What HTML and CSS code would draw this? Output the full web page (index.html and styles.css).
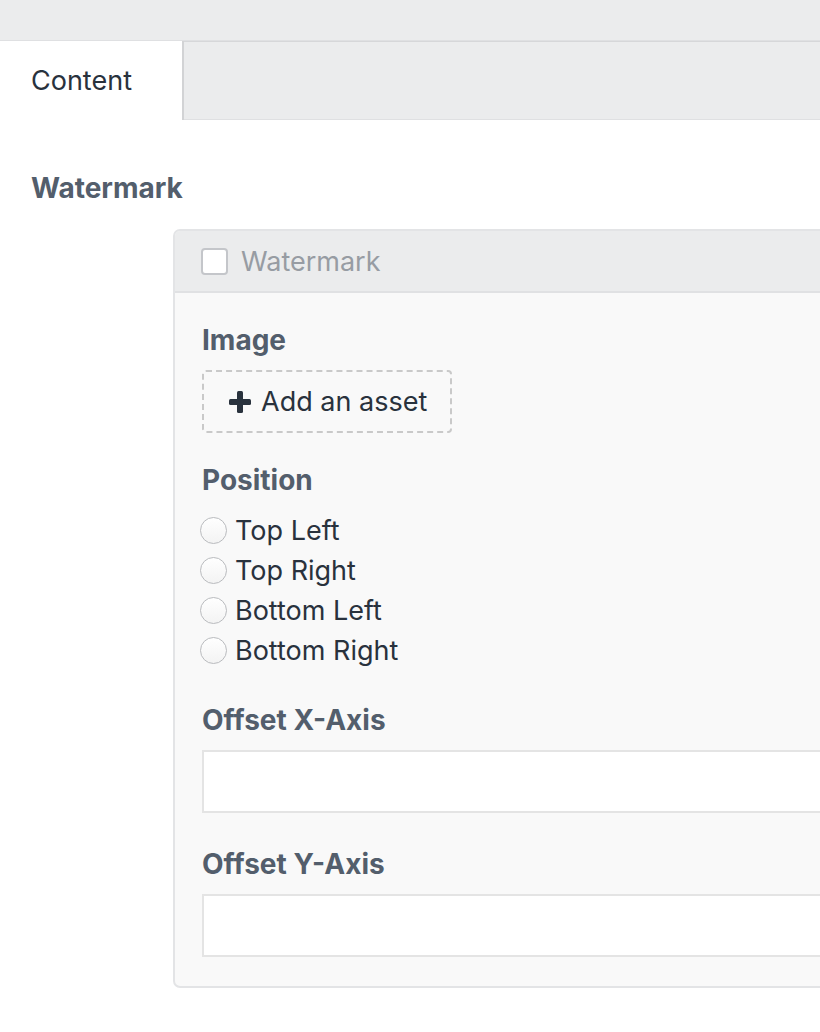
FILE: index.html
```html
<!DOCTYPE html>
<html lang="en">
<head>
<meta charset="utf-8">
<title>Watermark</title>
<link rel="stylesheet" href="styles.css">
</head>
<body>
<div class="topbar"></div>
<div class="tabs">
  <div class="tab active">Content</div>
  <div class="tab-fill"></div>
</div>
<main class="content">
  <h2 class="section-title">Watermark</h2>
  <div class="panel">
    <div class="panel-head">
      <span class="checkbox"></span>
      <span class="panel-title">Watermark</span>
    </div>
    <div class="panel-body">
      <div class="field field-image">
        <div class="label">Image</div>
        <div class="asset-btn">
          <svg class="plus" viewBox="0 0 22 22" width="22" height="22"><rect x="8" y="0" width="6" height="22" rx="1.5" fill="#29323d"/><rect x="0" y="8" width="22" height="6" rx="1.5" fill="#29323d"/></svg>
          <span>Add an asset</span>
        </div>
      </div>
      <div class="field field-position">
        <div class="label">Position</div>
        <div class="radios">
          <div class="radio-row"><span class="radio"></span><span>Top Left</span></div>
          <div class="radio-row"><span class="radio"></span><span>Top Right</span></div>
          <div class="radio-row"><span class="radio"></span><span>Bottom Left</span></div>
          <div class="radio-row"><span class="radio"></span><span>Bottom Right</span></div>
        </div>
      </div>
      <div class="field field-offset">
        <div class="label">Offset X-Axis</div>
        <div class="input"></div>
      </div>
      <div class="field field-offset last">
        <div class="label">Offset Y-Axis</div>
        <div class="input"></div>
      </div>
    </div>
  </div>
</main>
</body>
</html>
```

FILE: styles.css
```css
html, body {
  margin: 0;
  padding: 0;
  background: #ffffff;
  overflow: hidden;
}
body {
  font-family: Inter, "Open Sans", "Liberation Sans", sans-serif;
  color: #29323d;
  width: 820px;
  height: 1032px;
}
.topbar {
  height: 40px;
  background: #ebeced;
  border-bottom: 1px solid #dfe0e2;
}
.tabs {
  display: flex;
  height: 79px;
}
.tab {
  width: 151px;
  padding-left: 31px;
  display: flex;
  align-items: center;
  font-size: 27px;
  background: #ffffff;
  border-right: 2px solid #d2d3d5;
  color: #29323d;
}
.tab-fill {
  flex: 1;
  background: #ebeced;
  border-top: 1px solid #d6d7d9;
  border-bottom: 1px solid #dfe0e2;
}
.content {
  padding-left: 31px;
}
.section-title {
  margin: 50px 0 23px 0;
  font-size: 28px;
  line-height: 36px;
  font-weight: 700;
  color: #535e6c;
}
.panel {
  margin-left: 142px;
  width: 720px;
  border: 2px solid #e3e4e6;
  border-radius: 7px;
  background: #f9f9f9;
  overflow: hidden;
}
.panel-head {
  background: #ebeced;
  border-bottom: 2px solid #e0e1e3;
  display: flex;
  align-items: center;
  padding-left: 26px;
  box-sizing: border-box;
  height: 62px;
}
.checkbox {
  width: 23px;
  height: 23px;
  border: 2px solid #c4c6ca;
  border-radius: 4px;
  background: #ffffff;
  margin-right: 13px;
}
.panel-title {
  font-size: 27px;
  color: #979ca3;
}
.panel-body {
  padding: 29px 0 29px 27px;
}
.field-image {
  margin-bottom: 29px;
}
.field-position {
  margin-bottom: 32px;
}
.field-offset {
  margin-bottom: 33px;
}
.field.last {
  margin-bottom: 0;
}
.label {
  font-size: 28px;
  line-height: 36px;
  font-weight: 700;
  color: #535e6c;
  margin-bottom: 12px;
}
.asset-btn {
  height: 59px;
  border: 2px dashed #c9c9c9;
  border-radius: 4px;
  display: flex;
  align-items: center;
  padding-left: 25px;
  width: 221px;
  font-size: 27px;
  color: #29323d;
}
.plus {
  margin-right: 10px;
  flex: none;
}
.radios {
  margin-top: 3px;
  margin-left: -2px;
}
.radio-row {
  height: 40px;
  display: flex;
  align-items: center;
  font-size: 27px;
  color: #29323d;
}
.radio {
  width: 25px;
  height: 25px;
  border: 1px solid #b9bbbe;
  border-radius: 50%;
  background: linear-gradient(#ffffff, #f3f3f3);
  margin-right: 8px;
  flex: none;
}
.input {
  height: 59px;
  background: #ffffff;
  border: 2px solid #e4e4e4;
  border-right: none;
}
```
